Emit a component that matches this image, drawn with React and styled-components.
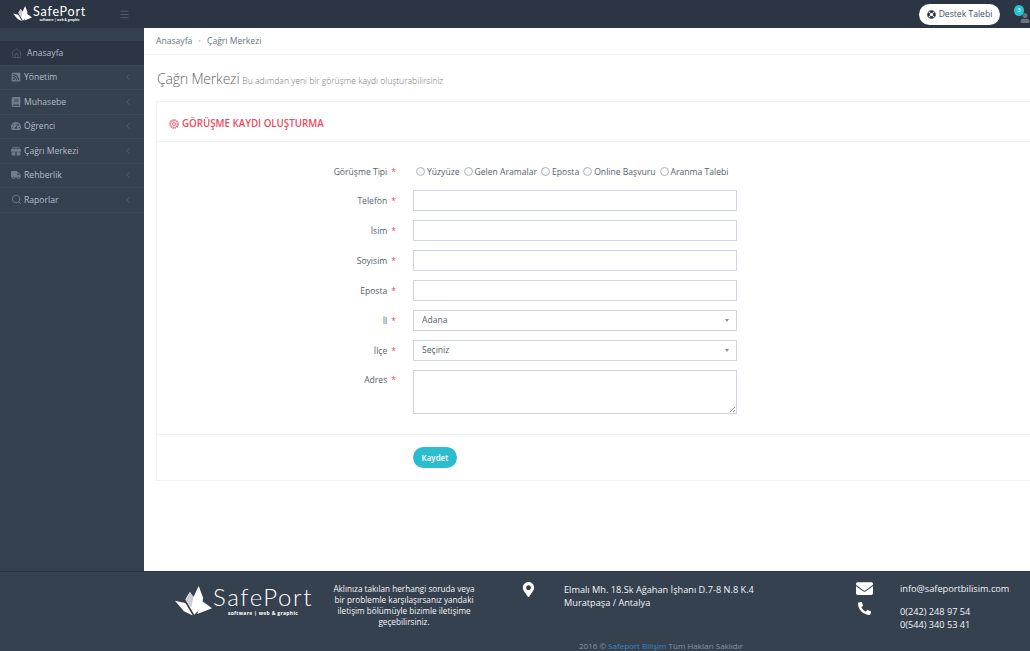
import styled, { createGlobalStyle } from "styled-components";
import { Home, Search, ChevronLeft, Menu } from "lucide-react";
import { FaRssSquare, FaBook, FaTachometerAlt, FaGift, FaTruck, FaLifeRing, FaMapMarkerAlt, FaEnvelope, FaPhoneAlt, FaUser } from "react-icons/fa";

const GlobalStyle = createGlobalStyle`
  html, body {
    margin: 0;
    padding: 0;
    overflow: hidden;
  }
  body {
    font-family: "Open Sans", "Liberation Sans", sans-serif;
    background: #fff;
  }
`

const Page = styled.div`
  width: 1030px;
  height: 651px;
  overflow: hidden;
  display: flex;
  flex-direction: column;
`

const Header = styled.header`
  height: 28px;
  flex: none;
  display: flex;
  align-items: center;
  background: #2b3543;
  color: #fff;
`

const LogoBox = styled.div`
  width: 119px;
  padding-left: 13px;
  box-sizing: border-box;
  display: flex;
  align-items: center;
  gap: 1px;
`

const LogoWords = styled.div`
  display: flex;
  flex-direction: column;
  align-items: center;
  color: #fff;
  .name {
    font-family: "Lato", sans-serif;
    font-weight: ${p => p.$big ? 300 : 400};
    font-size: ${p => p.$big ? "24px" : "12.5px"};
    line-height: ${p => p.$big ? "24px" : "12px"};
    letter-spacing: ${p => p.$big ? "1.6px" : ".8px"};
  }
  .tag {
    font-size: ${p => p.$big ? "5px" : "3px"};
    line-height: ${p => p.$big ? "8px" : "4px"};
    font-weight: 700;
    letter-spacing: ${p => p.$big ? ".3px" : ".1px"};
  }
`

const MenuToggle = styled.div`
  color: #56606e;
  display: flex;
`

const HeaderRight = styled.div`
  margin-left: auto;
  display: flex;
  align-items: center;
  gap: 14px;
`

const SupportButton = styled.button`
  height: 21px;
  width: 81px;
  padding: 0;
  border: 0;
  border-radius: 11px;
  background: #fff;
  color: #444f5e;
  font: 400 8.6px "Open Sans", sans-serif;
  display: flex;
  align-items: center;
  justify-content: center;
  gap: 3px;
  svg {
    color: #2b3543;
  }
`

const Notice = styled.div`
  position: relative;
  width: 16px;
  height: 18px;
  .badge {
    position: absolute;
    left: 0;
    top: 0;
    width: 10px;
    height: 11px;
    border-radius: 50%;
    background: #2bc3d2;
    color: #fff;
    font-size: 6px;
    line-height: 11px;
    text-align: center;
    z-index: 1;
  }
  svg {
    position: absolute;
    right: 0;
    bottom: 0;
    color: #6c7683;
  }
`

const Body = styled.div`
  flex: 1;
  min-height: 0;
  display: flex;
`

const Sidebar = styled.nav`
  width: 144px;
  flex: none;
  padding-top: 13px;
  box-sizing: border-box;
  background: #364150;
`

const NavItem = styled.div`
  height: 24.5px;
  box-sizing: border-box;
  display: flex;
  align-items: center;
  padding: ${p => p.$active ? "1px" : "0"} 11px 0;
  gap: ${p => p.$active ? "5px" : "3px"};
  font-size: 8.6px;
  color: #b4bcc8;
  background: ${p => p.$active ? "#2b3543" : "transparent"};
  border-bottom: 1px solid #3d4957;
  svg.icon {
    color: #717d8c;
    flex: none;
  }
  svg.wide {
    margin-right: -1px;
  }
  svg.arrow {
    margin-left: auto;
    color: #606c7b;
  }
`

const Main = styled.main`
  flex: 1;
  min-width: 0;
  background: #fff;
  overflow: hidden;
`

const Breadcrumb = styled.div`
  height: 27px;
  box-sizing: border-box;
  padding-left: 12px;
  display: flex;
  align-items: center;
  gap: 5px;
  font-size: 8.6px;
  color: #6a7482;
  border-bottom: 1px solid #eef1f5;
  .dot {
    color: #b5bdc8;
    font-size: 7px;
    padding: 0 1px;
  }
`

const TitleRow = styled.div`
  padding: 13px 0 0 13px;
  height: 46px;
  box-sizing: border-box;
  display: flex;
  align-items: baseline;
  gap: 3px;
  h1 {
    margin: 0;
    font-size: 14px;
    line-height: 22px;
    font-weight: 300;
    letter-spacing: -.2px;
    color: #666;
  }
  small {
    font-size: 8.6px;
    font-weight: 300;
    color: #777;
  }
`

const Card = styled.section`
  margin-left: 12px;
  width: 900px;
  height: 380px;
  box-sizing: border-box;
  border: 1px solid #eef1f5;
`

const CardHead = styled.div`
  height: 40px;
  box-sizing: border-box;
  padding: 4px 0 0 12px;
  display: flex;
  align-items: center;
  gap: 3px;
  border-bottom: 1px solid #eef1f5;
  color: #ed4a5c;
  font-size: 9.75px;
  font-weight: 600;
`

const Form = styled.form`
  padding-top: 14px;
  height: 293px;
  box-sizing: border-box;
  border-bottom: 1px solid #eef1f5;
`

const Row = styled.div`
  height: ${p => p.$short ? "29px" : "30px"};
  display: flex;
  align-items: ${p => p.$top ? "flex-start" : "center"};
  padding-top: ${p => p.$top ? "5px" : "0"};
  box-sizing: border-box;
`

const Label = styled.label`
  width: 256px;
  flex: none;
  box-sizing: border-box;
  padding-right: 17px;
  padding-top: ${p => p.$top ? "4px" : "2px"};
  text-align: right;
  font-size: 8.6px;
  color: #555f6c;
  b {
    color: #ed4a5c;
    margin-left: 4px;
    font-weight: 400;
  }
`

const Radios = styled.div`
  display: flex;
  gap: 4px;
  margin-left: 3px;
  padding-top: 2px;
  font-size: 8.6px;
  color: #555f6c;
  span {
    display: flex;
    align-items: center;
    gap: 2px;
  }
  i {
    width: 7px;
    height: 7px;
    border: 1px solid #a9b2bd;
    border-radius: 50%;
    background: #fff;
  }
`

const Field = styled.div`
  width: 324px;
  height: 21px;
  box-sizing: border-box;
  border: 1px solid #cfd6e1;
  background: #fff;
  padding: 0 7px 0 8px;
  display: flex;
  align-items: center;
  justify-content: space-between;
  font-size: 8.6px;
  color: #555f6c;
  &::after {
    content: "";
    display: ${p => p.$select ? "block" : "none"};
    border-left: 2.5px solid transparent;
    border-right: 2.5px solid transparent;
    border-top: 3px solid #8a929c;
  }
`

const AddressBox = styled.div`
  position: relative;
  width: 324px;
  height: 44px;
  box-sizing: border-box;
  border: 1px solid #cfd6e1;
  svg {
    position: absolute;
    right: 0;
    bottom: 0;
  }
`

const Actions = styled.div`
  display: flex;
  padding: 12px 0 0 256px;
`

const SaveButton = styled.button`
  width: 44px;
  height: 21px;
  padding: 0;
  border: 0;
  border-radius: 11px;
  background: #2bbdcd;
  color: #fff;
  font: 600 8px "Open Sans", sans-serif;
`

const Footer = styled.footer`
  height: 80px;
  flex: none;
  box-sizing: border-box;
  border-top: 1px solid #2b3543;
  background: #364150;
  color: #f2f4f6;
`

const FooterCols = styled.div`
  display: flex;
  align-items: flex-start;
  height: 68px;
  padding-top: 8px;
  box-sizing: border-box;
`

const FooterLogo = styled.div`
  margin-left: 175px;
  width: 150px;
  padding-top: 5px;
  display: flex;
  align-items: center;
  gap: 1px;
`

const FooterHelp = styled.p`
  width: 158px;
  margin: 0;
  padding-top: 3px;
  text-align: center;
  font-size: 8.2px;
  line-height: 11px;
  font-weight: 500;
`

const PinCol = styled.div`
  margin-left: 38px;
  width: 43px;
  flex: none;
  color: #fff;
`

const Address = styled.div`
  width: 292px;
  font-size: 9.2px;
  line-height: 13px;
  font-weight: 500;
  padding-top: 3px;
`

const ContactIcons = styled.div`
  width: 44px;
  display: flex;
  flex-direction: column;
  gap: 5px;
  color: #fff;
  svg.phone {
    margin-left: 2px;
  }
`

const Contact = styled.div`
  font-size: 9.2px;
  line-height: 13px;
  font-weight: 500;
  padding-top: 2px;
  p {
    margin: 0 0 10px;
  }
`

const Copy = styled.div`
  padding-left: 579px;
  font-size: 8px;
  color: #8995a3;
  a {
    color: #3f82c2;
  }
`

function LogoMark({ size }) {
  return (
    <svg width={size} height={size * 0.8} viewBox="0 0 50 40">
      <path d="M0 20 L14 23 L24 40 L12 34 Z" fill="#fff" />
      <path d="M14 18 L20 8 L25 15 L32 0 L38 16 L36 29 L26 39 Z" fill="#fff" />
      <path d="M20 8 L25 15 L22 29 L15 19 Z" fill="#c9ced4" />
      <path d="M36 20 L50 30 L30 38 Z" fill="#fff" />
    </svg>
  )
}

function GearIcon() {
  return (
    <svg width="10" height="10" viewBox="0 0 10 10" fill="none" stroke="currentColor">
      <circle cx="5" cy="5" r="4.2" strokeWidth="1.2" strokeDasharray="1.3 .9" />
      <circle cx="5" cy="5" r="3.4" strokeWidth=".6" />
      <circle cx="5" cy="5" r="1.5" strokeWidth=".8" />
    </svg>
  )
}

const navItems = [
  { label: "Yönetim", Icon: FaRssSquare, size: 10 },
  { label: "Muhasebe", Icon: FaBook, size: 10 },
  { label: "Öğrenci", Icon: FaTachometerAlt, size: 10 },
  { label: "Çağrı Merkezi", Icon: FaGift, size: 10 },
  { label: "Rehberlik", Icon: FaTruck, size: 10 },
  { label: "Raporlar", Icon: Search, size: 11, wide: true },
];

const textFields = ["Telefon", "İsim", "Soyisim", "Eposta"];
const callTypes = ["Yüzyüze", "Gelen Aramalar", "Eposta", "Online Başvuru", "Aranma Talebi"];

function App() {
  return (
    <Page>
      <GlobalStyle />
      <Header>
        <LogoBox>
          <LogoMark size={19} />
          <LogoWords>
            <span className="name">SafePort</span>
            <span className="tag">software | web &amp; graphic</span>
          </LogoWords>
        </LogoBox>
        <MenuToggle><Menu size={11} /></MenuToggle>
        <HeaderRight>
          <SupportButton><FaLifeRing size={9} />Destek Talebi</SupportButton>
          <Notice>
            <span className="badge">3</span>
            <FaUser size={10} />
          </Notice>
        </HeaderRight>
      </Header>
      <Body>
        <Sidebar>
          <NavItem $active>
            <Home className="icon" size={11} strokeWidth={1} />
            Anasayfa
          </NavItem>
          {navItems.map(({ label, Icon, size, wide }) => (
            <NavItem key={label}>
              <Icon className={wide ? "icon wide" : "icon"} size={size} />
              {label}
              <ChevronLeft className="arrow" size={10} strokeWidth={1.5} />
            </NavItem>
          ))}
        </Sidebar>
        <Main>
          <Breadcrumb>
            Anasayfa<span className="dot">•</span>Çağrı Merkezi
          </Breadcrumb>
          <TitleRow>
            <h1>Çağrı Merkezi</h1>
            <small>Bu adımdan yeni bir görüşme kaydı oluşturabilirsiniz</small>
          </TitleRow>
          <Card>
            <CardHead><GearIcon />GÖRÜŞME KAYDI OLUŞTURMA</CardHead>
            <Form>
              <Row $short>
                <Label>Görüşme Tipi<b>*</b></Label>
                <Radios>
                  {callTypes.map(t => <span key={t}><i />{t}</span>)}
                </Radios>
              </Row>
              {textFields.map(f => (
                <Row key={f}>
                  <Label>{f}<b>*</b></Label>
                  <Field />
                </Row>
              ))}
              <Row>
                <Label>İl<b>*</b></Label>
                <Field $select>Adana</Field>
              </Row>
              <Row>
                <Label>İlçe<b>*</b></Label>
                <Field $select>Seçiniz</Field>
              </Row>
              <Row $top>
                <Label $top>Adres<b>*</b></Label>
                <AddressBox>
                  <svg width="7" height="7" viewBox="0 0 7 7">
                    <path d="M1 6 L6 1 M4 6 L6 4" stroke="#777" strokeWidth=".8" />
                  </svg>
                </AddressBox>
              </Row>
            </Form>
            <Actions><SaveButton type="button">Kaydet</SaveButton></Actions>
          </Card>
        </Main>
      </Body>
      <Footer>
        <FooterCols>
          <FooterLogo>
            <LogoMark size={37} />
            <LogoWords $big>
              <span className="name">SafePort</span>
              <span className="tag">software | web &amp; graphic</span>
            </LogoWords>
          </FooterLogo>
          <FooterHelp>
            Aklınıza takılan herhangi soruda veya<br />
            bir problemle karşılaşırsanız yandaki<br />
            iletişim bölümüyle bizimle iletişime<br />
            geçebilirsiniz.
          </FooterHelp>
          <PinCol><FaMapMarkerAlt size={15} /></PinCol>
          <Address>
            Elmalı Mh. 18.Sk Ağahan İşhanı D.7-8 N.8 K.4<br />Muratpaşa / Antalya
          </Address>
          <ContactIcons>
            <FaEnvelope size={17} />
            <FaPhoneAlt className="phone" size={13} />
          </ContactIcons>
          <Contact>
            <p>info@safeportbilisim.com</p>
            0(242) 248 97 54<br />0(544) 340 53 41
          </Contact>
        </FooterCols>
        <Copy>2016 © <a>Safeport Bilişim</a> Tüm Hakları Saklıdır</Copy>
      </Footer>
    </Page>
  )
}

export default App;
